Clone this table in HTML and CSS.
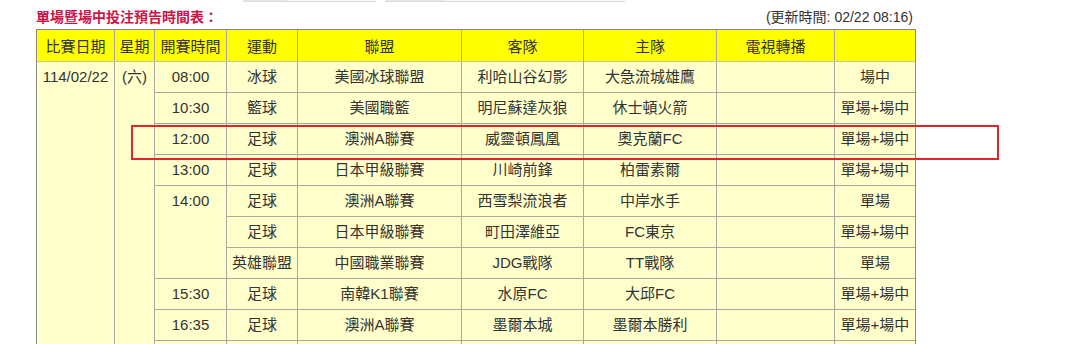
FILE: index.html
```html
<!DOCTYPE html>
<html lang="zh-Hant">
<head>
<meta charset="utf-8">
<title>單場暨場中投注預告時間表</title>
<link rel="stylesheet" href="styles.css">
</head>
<body>
<div class="page">
  <div class="topbar">
    <div class="tab tab-a"><span class="tab-fill"></span></div>
    <div class="tab tab-b"><span class="tab-fill"></span></div>
  </div>
  <div class="sheet">
    <div class="heading">
      <span class="title">單場暨場中投注預告時間表：</span>
      <span class="updated">(更新時間: 02/22 08:16)</span>
    </div>
    <table class="schedule">
      <colgroup>
        <col class="c-date"><col class="c-week"><col class="c-time"><col class="c-sport"><col class="c-league"><col class="c-away"><col class="c-home"><col class="c-tv"><col class="c-type">
      </colgroup>
      <thead>
        <tr>
          <th>比賽日期</th><th>星期</th><th>開賽時間</th><th>運動</th><th>聯盟</th><th>客隊</th><th>主隊</th><th>電視轉播</th><th></th>
        </tr>
      </thead>
      <tbody>
        <tr>
          <td class="top" rowspan="10">114/02/22</td>
          <td class="top" rowspan="10">(六)</td>
          <td>08:00</td><td>冰球</td><td>美國冰球聯盟</td><td>利哈山谷幻影</td><td>大急流城雄鷹</td><td></td><td>場中</td>
        </tr>
        <tr><td>10:30</td><td>籃球</td><td>美國職籃</td><td>明尼蘇達灰狼</td><td>休士頓火箭</td><td></td><td>單場+場中</td></tr>
        <tr><td>12:00</td><td>足球</td><td>澳洲A聯賽</td><td>威靈頓鳳凰</td><td>奧克蘭FC</td><td></td><td>單場+場中</td></tr>
        <tr><td>13:00</td><td>足球</td><td>日本甲級聯賽</td><td>川崎前鋒</td><td>柏雷素爾</td><td></td><td>單場+場中</td></tr>
        <tr><td class="top" rowspan="3">14:00</td><td>足球</td><td>澳洲A聯賽</td><td>西雪梨流浪者</td><td>中岸水手</td><td></td><td>單場</td></tr>
        <tr><td>足球</td><td>日本甲級聯賽</td><td>町田澤維亞</td><td>FC東京</td><td></td><td>單場+場中</td></tr>
        <tr><td>英雄聯盟</td><td>中國職業聯賽</td><td>JDG戰隊</td><td>TT戰隊</td><td></td><td>單場</td></tr>
        <tr><td>15:30</td><td>足球</td><td>南韓K1聯賽</td><td>水原FC</td><td>大邱FC</td><td></td><td>單場+場中</td></tr>
        <tr><td>16:35</td><td>足球</td><td>澳洲A聯賽</td><td>墨爾本城</td><td>墨爾本勝利</td><td></td><td>單場+場中</td></tr>
        <tr><td></td><td></td><td></td><td></td><td></td><td></td><td></td></tr>
      </tbody>
    </table>
    <div class="highlight"></div>
  </div>
</div>
</body>
</html>
```

FILE: styles.css
```css
html, body {
  margin: 0;
  padding: 0;
  background: #ffffff;
  overflow: hidden;
}

body {
  font-family: "Liberation Sans", "Noto Sans CJK TC", sans-serif;
  color: #333333;
}

.page {
  width: 1080px;
  height: 344px;
}

.topbar {
  display: flex;
  gap: 9px;
  height: 2px;
  padding-left: 243px;
}

.tab {
  height: 1px;
  border-bottom: 1px solid #dcdcdc;
  background: #f6f6f6;
  display: flex;
}

.tab-a { width: 133px; }
.tab-b { width: 240px; }
.tab-a .tab-fill { width: 44px; }
.tab-b .tab-fill { width: 58px; }

.tab-fill {
  background: #e4e6ea;
}

.sheet {
  position: relative;
  margin-left: 36px;
  width: 878px;
}

.heading {
  display: flex;
  justify-content: space-between;
  align-items: center;
  height: 27px;
  font-size: 14px;
}

.title {
  color: #cc1448;
  font-weight: bold;
}

.updated {
  color: #333333;
  padding-right: 1px;
}

.schedule {
  width: 878px;
  table-layout: fixed;
  border-collapse: separate;
  border-spacing: 0;
  border: 1px solid #8a8a8a;
  font-size: 15px;
}

.c-date { width: 78px; }
.c-week { width: 40px; }
.c-time { width: 72px; }
.c-sport { width: 71px; }
.c-league { width: 164px; }
.c-away { width: 122px; }
.c-home { width: 133px; }
.c-tv { width: 118px; }
.c-type { width: 80px; }

.schedule th,
.schedule td {
  padding: 0;
  text-align: center;
  vertical-align: middle;
  white-space: nowrap;
  border-right: 1px solid #a9a9a2;
  border-bottom: 1px solid #a9a9a2;
}

.schedule th:last-child,
.schedule td:last-child {
  border-right: none;
}

.schedule th {
  background: #ffff00;
  font-weight: normal;
  height: 31px;
  color: #333333;
  border-bottom-color: #c8c8a0;
}

.schedule td {
  background: #ffffcc;
  height: 30px;
  line-height: 30px;
}

.schedule td.top {
  vertical-align: top;
}

.highlight {
  position: absolute;
  left: 95px;
  top: 123px;
  width: 864px;
  height: 31px;
  border: 2px solid #e5232d;
  pointer-events: none;
}
```
